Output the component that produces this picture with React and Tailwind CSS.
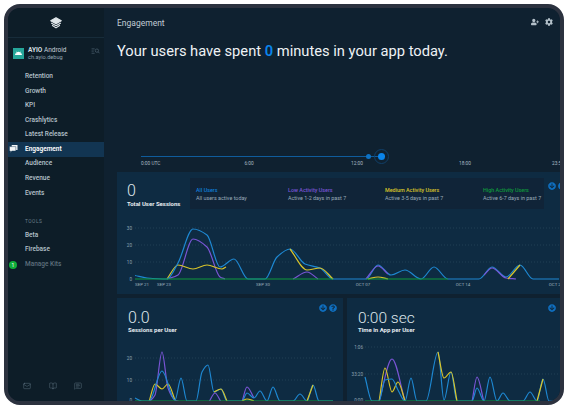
import { FaUserPlus, FaCog, FaArrowCircleDown, FaQuestionCircle, FaAndroid } from 'react-icons/fa';
import { Mail, BookOpen, MessageSquareText } from 'lucide-react';

const font = { fontFamily: 'Roboto, sans-serif' };

// monotone curve through points, so flat stretches don't overshoot
const curve = (pts) => {
    const s = pts.slice(1).map((p, i) => (p[1] - pts[i][1]) / (p[0] - pts[i][0]));
    const m = pts.map((_, i) => {
        if (i === 0) return s[0];
        if (i === pts.length - 1) return s[i - 1];
        if (s[i - 1] * s[i] <= 0) return 0;
        return (2 * s[i - 1] * s[i]) / (s[i - 1] + s[i]);
    });
    let d = `M${pts[0][0]} ${pts[0][1]}`;
    for (let i = 1; i < pts.length; i++) {
        const dx = (pts[i][0] - pts[i - 1][0]) / 3;
        d += ` C${pts[i - 1][0] + dx} ${pts[i - 1][1] + m[i - 1] * dx} ${pts[i][0] - dx} ${pts[i][1] - m[i] * dx} ${pts[i][0]} ${pts[i][1]}`;
    }
    return d;
};

const BLUE = '#1e88d2';
const PURPLE = '#7a55d6';
const YELLOW = '#d9c52a';
const GREEN = '#0f9a3c';

const Line = ({ pts, color, w = 1.2 }) => <path d={curve(pts)} fill="none" stroke={color} strokeWidth={w} />;

const Grid = ({ rows, x1, x2, labelX }) => rows.map(([y, label]) => (
    <g key={label}>
        <line x1={x1} x2={x2} y1={y} y2={y} stroke="#2f4d63" strokeWidth="0.6" strokeDasharray="1 2" />
        <text x={labelX} y={y + 1.6} fontSize="4.6" fill="#8ea3b2" textAnchor="end" style={font}>{label}</text>
    </g>
));

const TopChart = () => (
    <svg viewBox="117 222 447 72" className="w-[447px] h-[72px] block">
        <Grid rows={[[228, '30'], [245, '20'], [262, '10']]} x1={135} x2={559} labelX={132} />
        <text x={132} y={281} fontSize="4.6" fill="#8ea3b2" textAnchor="end" style={font}>0</text>
        <Line color={PURPLE} pts={[[167, 279], [178, 275], [193, 239], [207, 247], [220, 277], [225, 279]]} />
        <Line color={PURPLE} pts={[[293, 279], [307, 272], [318, 279]]} />
        <Line color={YELLOW} pts={[[167, 279], [178, 265], [193, 269], [207, 265], [222, 269], [226, 267]]} />
        <Line color={BLUE} pts={[[135, 275.5], [147, 278], [167, 279], [178, 263], [193, 229], [207, 235], [220, 267], [234, 259], [248, 279], [265, 279], [277, 257], [290, 249], [305, 264], [320, 268], [333, 279], [366, 279], [378, 265], [391, 275], [405, 270], [421, 279], [434, 267], [448, 279], [479, 279], [492, 267], [506, 277], [520, 265], [533, 279], [559, 279]]} />
        <Line color={YELLOW} pts={[[290, 249], [307, 270], [320, 268], [333, 279]]} />
        <Line color={PURPLE} pts={[[366, 279], [378, 266], [388, 274]]} />
        <Line color={PURPLE} pts={[[484, 275], [492, 268], [506, 278], [516, 279]]} />
        <Line color={YELLOW} pts={[[368, 279], [378, 277], [388, 279]]} />
        <Line color={YELLOW} pts={[[508, 279], [520, 265]]} />
        <line x1="135" x2="333" y1="279" y2="279" stroke={GREEN} strokeWidth="1.2" />
        <line x1="366" x2="448" y1="279" y2="279" stroke={GREEN} strokeWidth="1" />
        {[['SEP 21', 142], ['SEP 23', 164], ['SEP 30', 263], ['OCT 07', 363], ['OCT 14', 463], ['OCT 21', 556]].map(([t, x]) => (
            <text key={t} x={x} y={285.5} fontSize="4.4" fill="#9fb1bf" textAnchor="middle" style={font}>{t}</text>
        ))}
    </svg>
);

const SessionsChart = () => (
    <svg viewBox="117 340 226 62" className="w-[226px] h-[62px] block">
        <Grid rows={[[358, '20'], [380, '10']]} x1={135} x2={333} labelX={132} />
        <text x={132} y={402} fontSize="4.6" fill="#8ea3b2" textAnchor="end" style={font}>0</text>
        <Line color={PURPLE} pts={[[149, 402], [155, 395], [162, 352], [168, 388], [175, 400], [180, 402]]} />
        <Line color={PURPLE} pts={[[209, 402], [215, 393], [221, 402]]} />
        <Line color={PURPLE} pts={[[242, 402], [247, 387], [254, 398]]} />
        <Line color={YELLOW} pts={[[149, 402], [155, 384], [162, 389], [168, 384], [175, 400]]} />
        <Line color={BLUE} pts={[[135, 398], [142, 401], [149, 401], [162, 371], [175, 400], [181, 378], [187, 401], [196, 401], [202, 372], [208, 365], [214, 392], [221, 389], [227, 401], [242, 401], [247, 393], [254, 398], [260, 391], [267, 401], [273, 387], [280, 401], [293, 401], [300, 394], [307, 401], [313, 385], [319, 401], [333, 401]]} />
        <Line color={YELLOW} pts={[[214, 392], [221, 389], [227, 401]]} />
        <Line color={YELLOW} pts={[[242, 401], [247, 399], [254, 401]]} />
        <Line color={YELLOW} pts={[[307, 401], [313, 385]]} />
        <line x1="135" x2="333" y1="401" y2="401" stroke={GREEN} strokeWidth="1" />
    </svg>
);

const TimeChart = () => (
    <svg viewBox="347 340 226 62" className="w-[226px] h-[62px] block">
        <Grid rows={[[347, '1:06'], [374, '33:20']]} x1={365} x2={559} labelX={363} />
        <text x={363} y={402} fontSize="4.6" fill="#8ea3b2" textAnchor="end" style={font}>0:00</text>
        <Line color={PURPLE} pts={[[379, 402], [392, 359], [405, 401]]} />
        <Line color={PURPLE} pts={[[472, 402], [477, 377], [484, 402]]} />
        <Line color={YELLOW} pts={[[379, 402], [385, 368], [392, 392], [398, 382], [405, 401]]} />
        <Line color={BLUE} pts={[[365, 377], [372, 401], [379, 401], [385, 380], [392, 379], [398, 390], [405, 401], [411, 378], [417, 401], [426, 401], [438, 352], [444, 400], [451, 372], [457, 401], [472, 401], [477, 388], [484, 401], [490, 377], [497, 401], [503, 393], [510, 401], [523, 401], [530, 392], [537, 401], [543, 379], [549, 401], [560, 401]]} />
        <Line color={YELLOW} pts={[[438, 352], [444, 378], [451, 372], [457, 401]]} />
        <Line color={YELLOW} pts={[[537, 401], [543, 379]]} />
        <line x1="365" x2="540" y1="401" y2="401" stroke={GREEN} strokeWidth="1" />
    </svg>
);

const NavRow = ({ label, active, dim }) => (
    <div className={`h-[14.6px] flex items-center pl-[17px] text-[6.5px] font-medium ${active ? 'bg-[#123552] text-white font-semibold' : dim ? 'text-[#5d6f7c]' : 'text-[#b5c2cb]'}`}>
        {label}
    </div>
);

const Legend = ({ title, sub, color, width }) => (
    <div className={`${width} shrink-0`}>
        <div className={`text-[5.4px] font-medium leading-[8px] ${color}`}>{title}</div>
        <div className="text-[5.4px] leading-[8px] text-[#9aabb8]">{sub}</div>
    </div>
);

const Actions = ({ two, className }) => (
    <div className={`absolute top-[6px] flex gap-[2px] text-[#0f6fc0] text-[8px] ${className}`}>
        <FaArrowCircleDown />
        {two && <FaQuestionCircle />}
    </div>
);

const App = () => {
    return (
        <div className="w-[566px] h-[410px] bg-white p-[4px] overflow-hidden" style={font}>
            <div className="w-[560px] h-[401px] flex border-[4px] border-[#2c323f] rounded-[16px] overflow-hidden bg-[#0f2130]">
                {/* Sidebar */}
                <aside className="w-[96px] shrink-0 bg-[#0d1d28] flex flex-col">
                    <div className="h-[30px] border-b border-[#172c3a] flex items-center justify-center">
                        <svg viewBox="0 0 16 16" className="w-[14px] h-[14px]" fill="none" stroke="#dfe6ea" strokeWidth="1.3" strokeLinejoin="round">
                            <path d="M8 2 L14 5.5 L8 9 L2 5.5 Z" fill="#dfe6ea" />
                            <path d="M2.5 8 L8 11.2 L13.5 8" />
                            <path d="M3.5 10.6 L8 13.6 L12.5 10.6" />
                        </svg>
                    </div>
                    <div className="h-[30px] flex items-center pl-[5px] pr-[4px] gap-[4px]">
                        <div className="w-[11px] h-[11px] bg-[#26a69a] flex items-center justify-center text-white text-[7px]">
                            <FaAndroid />
                        </div>
                        <div className="flex-1">
                            <div className="text-[6.5px] leading-[8px] text-[#c5d0d8]"><span className="font-semibold text-[#dde4e9]">AYIO</span> Android</div>
                            <div className="text-[5.6px] leading-[7px] text-[#94a5b1]">ch.ayio.debug</div>
                        </div>
                        <svg viewBox="0 0 10 8" className="w-[9px] h-[7px] mb-[4px]" fill="none" stroke="#4f6473" strokeWidth="0.8">
                            <path d="M0.5 1H4M0.5 3.5H3M0.5 6H4" />
                            <circle cx="6.6" cy="3" r="1.9" />
                            <path d="M8 4.4L9.6 6" />
                        </svg>
                    </div>
                    <div className="mt-[1.5px]">
                        {['Retention', 'Growth', 'KPI', 'Crashlytics', 'Latest Release'].map((l) => <NavRow key={l} label={l} />)}
                        <div className="relative">
                            <NavRow label="Engagement" active />
                            <svg viewBox="0 0 10 9" className="absolute left-[1px] top-[2.5px] w-[9px] h-[8px]" fill="#f2f5f7">
                                <path d="M3 0H9.5V5.5H3Z" />
                                <path d="M0.5 1.8H7.6V6.8H3L1.6 8.6V6.8H0.5Z" stroke="#123552" strokeWidth="0.5" />
                            </svg>
                        </div>
                        {['Audience', 'Revenue', 'Events'].map((l) => <NavRow key={l} label={l} />)}
                        <div className="h-[27.5px] flex items-end pl-[17px] pb-[3px] text-[4.8px] tracking-[0.5px] text-[#6c7f8c]">TOOLS</div>
                        {['Beta', 'Firebase'].map((l) => <NavRow key={l} label={l} />)}
                        <div className="relative">
                            <NavRow label="Manage Kits" dim />
                            <div className="absolute left-[1px] top-[3px] w-[8px] h-[8px] rounded-full bg-[#10ae3b] text-white text-[5px] leading-[8px] text-center">1</div>
                        </div>
                    </div>
                    <div className="mt-auto mb-[11px] flex pl-[15px] gap-[17.5px] text-[#6f8594]">
                        <Mail size={8} strokeWidth={1.2} />
                        <BookOpen size={8} strokeWidth={1.2} />
                        <MessageSquareText size={8} strokeWidth={1.2} />
                    </div>
                </aside>

                {/* Main */}
                <main className="flex-1 min-w-0 overflow-hidden">
                    <header className="h-[30px] pl-[13px] pr-[7px] flex items-center justify-between">
                        <span className="text-[8.5px] text-[#c0ccd4]">Engagement</span>
                        <div className="flex items-center gap-[6px] text-[#b3c0c9] text-[8px] mb-[3px]">
                            <FaUserPlus />
                            <FaCog />
                        </div>
                    </header>
                    <h1 className="pl-[13px] mt-[2px] text-[14.7px] leading-[22px] text-[#eef2f5] whitespace-nowrap">
                        Your users have spent <span className="text-[#0a84ea] font-semibold">0</span> minutes in your app today.
                    </h1>
                    {/* Time slider */}
                    <div className="h-[110px] pl-[37px] pt-[94px]">
                        <div className="relative h-[1px] w-[240px] bg-[#0f5c9c]">
                            <div className="absolute left-[224.5px] top-[-2px] w-[5px] h-[5px] rounded-full bg-[#0d72c4]" />
                            <div className="absolute left-[233px] top-[-7px] w-[15px] h-[15px] rounded-full border border-[#0f3f68] flex items-center justify-center">
                                <div className="w-[7px] h-[7px] rounded-full bg-[#0a84ea]" />
                            </div>
                        </div>
                        <div className="flex gap-[72px] mt-[3px] text-[4.8px] text-[#a9b8c3] whitespace-nowrap">
                            <span className="w-[18px] shrink-0">0:00 UTC</span>
                            <span className="w-[36px] shrink-0 text-center">6:00</span>
                            <span className="w-[36px] shrink-0 text-center">12:00</span>
                            <span className="w-[36px] shrink-0 text-center">18:00</span>
                            <span className="w-[36px] shrink-0 ml-[-3px]">23:59</span>
                        </div>
                    </div>

                    {/* Total sessions card */}
                    <section className="ml-[13px] w-[470px] h-[122px] bg-[#0e2b42]">
                        <div className="h-[50px] flex pt-[6px]">
                            <div className="w-[73px] pl-[10px] pt-[4px] shrink-0">
                                <div className="text-[16px] font-light leading-[18px] text-[#dfe6ea]">0</div>
                                <div className="text-[6px] font-bold leading-[8px] text-[#e6ecf0] whitespace-nowrap">Total User Sessions</div>
                            </div>
                            <div className="w-[354px] h-[31px] shrink-0 bg-[#102438] flex items-center pl-[6px] whitespace-nowrap">
                                <Legend width="w-[92px]" title="All Users" sub="All users active today" color="text-[#0f7fd8]" />
                                <Legend width="w-[97px]" title="Low Activity Users" sub="Active 1-2 days in past 7" color="text-[#7a55d6]" />
                                <Legend width="w-[98px]" title="Medium Activity Users" sub="Active 3-5 days in past 7" color="text-[#d9c52a]" />
                                <Legend width="w-[60px]" title="High Activity Users" sub="Active 6-7 days in past 7" color="text-[#0f9a3c]" />
                            </div>
                            <div className="ml-[4px] mt-[4px] text-[#0f6fc0] text-[8px] flex gap-[2px]">
                                <FaArrowCircleDown />
                                <FaQuestionCircle />
                            </div>
                        </div>
                        <TopChart />
                    </section>

                    {/* Bottom cards */}
                    <div className="flex gap-[4px] ml-[13px] mt-[4px] w-[470px]">
                        <section className="relative w-[226px] h-[110px] shrink-0 bg-[#0e2b42]">
                            <Actions two className="right-[6px]" />
                            <div className="h-[42px] pl-[11px] pt-[12px]">
                                <div className="text-[16px] font-light leading-[16px] text-[#dfe6ea]">0.0</div>
                                <div className="text-[6px] font-bold leading-[8px] text-[#e6ecf0]">Sessions per User</div>
                            </div>
                            <SessionsChart />
                        </section>
                        <section className="relative w-[226px] h-[110px] shrink-0 bg-[#0e2b42]">
                            <Actions className="left-[201px]" />
                            <div className="h-[42px] pl-[11px] pt-[12px]">
                                <div className="text-[15.5px] font-light leading-[16px] text-[#dfe6ea]">0:00 sec</div>
                                <div className="text-[6px] font-bold leading-[8px] text-[#e6ecf0]">Time in App per User</div>
                            </div>
                            <TimeChart />
                        </section>
                    </div>
                </main>
            </div>
        </div>
    );
};

export default App;
